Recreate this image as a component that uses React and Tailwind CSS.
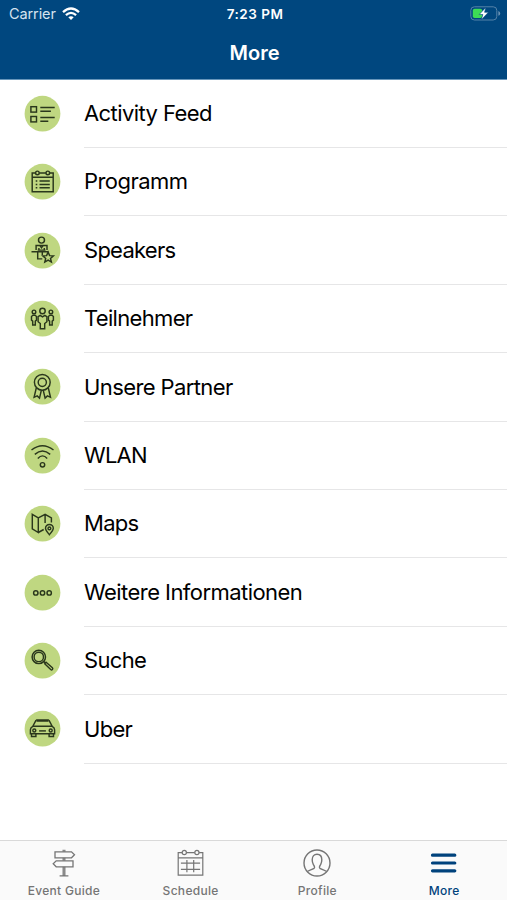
import { useState } from 'react';

function FeedIcon() {
  return (
    <>
      <rect x="6.4" y="11" width="5.6" height="5.4" />
      <rect x="6.4" y="20.8" width="5.6" height="5.4" />
      <path d="M15.8 11.8h14.4M15.8 15.5h10.6M15.8 21.8h14.4M15.8 25.5h8" />
    </>
  );
}

function ProgramIcon() {
  return (
    <>
      <path d="M11 9.3H7.7V28h21V9.3h-3.5M14.8 9.3h6.6M7.7 13.6h21" />
      <circle cx="12.9" cy="9.2" r="1.8" />
      <circle cx="23.3" cy="9.2" r="1.8" />
      <path d="M11.2 17.3h1.6M15 17.3h10.3M11.2 20.7h1.6M15 20.7h10.3M11.2 24.1h1.6M15 24.1h10.3" />
    </>
  );
}

function SpeakerIcon() {
  return (
    <>
      <circle cx="17" cy="7.4" r="3" />
      <path d="M11.6 17.4v-4.6h10.9v4.6M14.4 17.4v-2.2M19.8 17.4v-2.2" />
      <path d="M15.3 12.7l1.7 2.3 1.7-2.3" />
      <path d="M7 19h17M13.2 19v7.2h4.6M13.2 17.4h7.8M17.8 19v3.2" />
      <path d="M23.6 19.4l1.5 3.5 3.8.3-2.9 2.5.9 3.7-3.3-2-3.3 2 .9-3.7-2.9-2.5 3.8-.3z" />
    </>
  );
}

function AttendeesIcon() {
  return (
    <>
      <circle cx="18" cy="10.3" r="2.7" />
      <path d="M15.7 14.6l2.3 1.6 2.3-1.6 2.1 1.4v5l-2.2 1.8v5.3h-4.4v-5.3L13.6 21v-5z" />
      <circle cx="9.5" cy="11.2" r="1.8" />
      <path d="M8.4 14.6h2.2l1.4 1.2v3.6l-1.2 1v3.9H8.2v-3.9l-1.2-1v-3.6z" />
      <circle cx="26.4" cy="11.2" r="1.8" />
      <path d="M25.3 14.6h2.2l1.4 1.2v3.6l-1.2 1v3.9h-2.6v-3.9l-1.2-1v-3.6z" />
    </>
  );
}

function RibbonIcon() {
  return (
    <>
      <circle cx="17.8" cy="13.6" r="7.9" />
      <circle cx="17.8" cy="13.6" r="4.1" />
      <path d="M11.8 19.2L9.6 28.6l3.1-1.4 2.3 2.2 1.9-8M23.8 19.2l2.2 9.4-3.1-1.4-2.3 2.2-1.9-8" />
    </>
  );
}

function WlanIcon() {
  return (
    <>
      <path d="M7 12.3Q18 3.6 29 12.3M10.3 16.7Q18 9.8 25.7 16.7M13.3 20.7Q18 15.6 22.7 20.7" />
      <circle cx="18" cy="27.1" r="2.2" />
    </>
  );
}

function MapsIcon() {
  return (
    <>
      <path d="M7.8 8.6l6 3.6v14.6l-6-3.6zM13.8 12.2l6.8-3.6 6.3 3.6v4.6M20.6 8.6v8.8M13.8 26.8l5.4-3" />
      <path d="M24.9 29c-1.6-2-3.9-4.3-3.9-6.4a3.9 3.9 0 0 1 7.8 0c0 2.1-2.3 4.4-3.9 6.4z" />
      <circle cx="24.9" cy="22.7" r="1.4" />
    </>
  );
}

function InfoIcon() {
  return (
    <>
      <circle cx="11.3" cy="18.2" r="2.2" />
      <circle cx="18" cy="18.2" r="2.2" />
      <circle cx="24.7" cy="18.2" r="2.2" />
    </>
  );
}

function SearchIcon() {
  return (
    <>
      <circle cx="14.3" cy="14.2" r="6.7" />
      <circle cx="14.3" cy="14.2" r="4.7" />
      <path d="M19.1 18.7l1.7 1.5M21.6 19.5l6.3 5.6q.8.9 0 1.7t-1.7 0l-6-5.8z" />
    </>
  );
}

function CarIcon() {
  return (
    <>
      <path d="M11.6 9.3h12.8M12 10.4h12" />
      <path d="M11.6 9.4L8.3 15.6Q5.9 17 5.9 19v4h24.2v-4q0-2-2.4-3.4L24.4 9.4M8.3 15.6h19.4" />
      <path d="M7 23v2.8h4.4V23M24.6 23v2.8H29V23" />
      <circle cx="9.8" cy="19.8" r="1.5" />
      <circle cx="26.2" cy="19.8" r="1.5" />
      <path d="M14.6 20.2h6.8" />
    </>
  );
}

const menuItems = [
  { label: 'Activity Feed', icon: FeedIcon, tracking: 'tracking-[-0.58px]' },
  { label: 'Programm', icon: ProgramIcon, tracking: 'tracking-[-0.55px]' },
  { label: 'Speakers', icon: SpeakerIcon, tracking: 'tracking-[-0.74px]' },
  { label: 'Teilnehmer', icon: AttendeesIcon, tracking: 'tracking-[-0.68px]' },
  { label: 'Unsere Partner', icon: RibbonIcon, tracking: 'tracking-[-0.6px]' },
  { label: 'WLAN', icon: WlanIcon, tracking: 'tracking-[-0.75px]' },
  { label: 'Maps', icon: MapsIcon, tracking: 'tracking-[-0.7px]' },
  { label: 'Weitere Informationen', icon: InfoIcon, tracking: 'tracking-[-0.55px]' },
  { label: 'Suche', icon: SearchIcon, tracking: 'tracking-[-0.68px]' },
  { label: 'Uber', icon: CarIcon, tracking: 'tracking-[-0.7px]' },
];

function StatusBar() {
  return (
    <div className="grid h-7 grid-cols-3 items-center pl-[9px] pr-[6px] text-[14.5px] text-white">
      <div className="flex items-center gap-[6px] text-[#d5e3ef]">
        <span className="tracking-[-0.1px]">Carrier</span>
        <svg className="-mt-px h-[14px] w-[18px]" viewBox="0 0 18 14" fill="none" stroke="#fff" strokeWidth="2.3">
          <path d="M1 5.1Q9-2.1 17 5.1M3.9 8.1Q9 3.7 14.1 8.1" />
          <path d="M6.3 10.3Q9 8 11.7 10.3L9 13z" fill="#fff" stroke="none" />
        </svg>
      </div>
      <span className="text-center text-[13.5px] font-semibold tracking-[0.5px]">7:23 PM</span>
      {/* Battery */}
      <svg className="-mt-[2px] h-[15px] w-[31px] justify-self-end" viewBox="0 0 31 15" fill="none">
        <rect x="0.8" y="0.8" width="26" height="13.2" rx="3.6" stroke="#5583a9" />
        <path d="M28.4 5v4.8q1.8-.8 1.8-2.4T28.4 5z" fill="#6c94b6" />
        <rect x="2.8" y="2.7" width="9.4" height="9.4" rx="1.8" fill="#3ddc55" />
        <path d="M15.8 1.4L9.2 8.5h3.6l-1.4 5.2L18.4 6.3h-3.8z" fill="#fff" stroke="#00477f" strokeWidth="0.6" />
      </svg>
    </div>
  );
}

function MenuRow({ item }) {
  const Icon = item.icon;
  return (
    <li className="flex h-[68.4px] items-stretch">
      <div className="flex w-[84px] flex-shrink-0 items-center pl-6">
        <svg className="size-9 overflow-visible" viewBox="-0.5 0.3 36 36" fill="none" stroke="#2a371c" strokeWidth="1.45">
          <circle cx="18" cy="18" r="17.9" fill="#bfd781" stroke="none" />
          <Icon />
        </svg>
      </div>
      <div className={`flex flex-1 items-center border-b border-[#e6e6e7] pt-[0.6px] text-[22px] text-black ${item.tracking}`}>
        {item.label}
      </div>
    </li>
  );
}

function SignpostIcon() {
  return (
    <svg className="h-7 w-7" viewBox="0 0 28 28" fill="none" stroke="currentColor" strokeWidth="1.3">
      <path d="M5 2.8h16.5l3 3-3 3H5zM23 11.8H6.2l-3 3 3 3H23z" />
      <path d="M13.2.8v2M14.8.8v2M13.2 8.8v3M14.8 8.8v3M13.2 17.8v8.7M14.8 17.8v8.7M9.6 26.8h8.8" />
    </svg>
  );
}

function ScheduleIcon() {
  return (
    <svg className="h-7 w-7" viewBox="0.7 0 28 28" fill="none" stroke="currentColor" strokeWidth="1.2">
      <path d="M5.8 3.6H1.9v22.5h24.6V3.6h-3.7M10.2 3.6h8.2M1.9 8.8h24.6" />
      <circle cx="8" cy="3.5" r="2.1" />
      <circle cx="20.6" cy="3.5" r="2.1" />
      <path d="M4.6 14.2h19.2M4.6 20.3h19.2M10.6 11v12.3M17.4 11v12.3" />
    </svg>
  );
}

function ProfileIcon() {
  return (
    <svg className="h-7 w-7" viewBox="0 0 28 28" fill="none" stroke="currentColor" strokeWidth="1.4">
      <circle cx="14" cy="14" r="13" />
      <path d="M4.3 22.6c1.7-1.5 5.2-2.2 6.8-3.3 1.3-1-.1-2.5-.9-4.1-.8-1.5-1-2.8-1-4.4 0-3.6 2-5.6 4.8-5.6s4.8 2 4.8 5.6c0 1.6-.2 2.9-1 4.4-.8 1.6-2.2 3.1-.9 4.1 1.6 1.1 5.1 1.8 6.8 3.3" />
    </svg>
  );
}

function MoreIcon() {
  return (
    <svg className="h-7 w-7" viewBox="0.5 0 28 28" fill="none" stroke="currentColor" strokeWidth="3.2" strokeLinecap="round">
      <path d="M3 6.2h22.3M3 14h22.3M3 21.8h22.3" />
    </svg>
  );
}

const tabs = [
  { label: 'Event Guide', icon: SignpostIcon },
  { label: 'Schedule', icon: ScheduleIcon },
  { label: 'Profile', icon: ProfileIcon },
  { label: 'More', icon: MoreIcon },
];

export default function App() {
  const [activeTab, setActiveTab] = useState('More');

  return (
    <div className="flex h-[900px] w-full flex-col overflow-hidden bg-white font-['Inter',sans-serif]">
      <header className="h-[79.6px] flex-shrink-0 border-b border-[#6796bb] bg-[#00477f]">
        <StatusBar />
        <h1 className="pl-[2px] pt-[10px] text-center text-[20px] leading-[30px] font-semibold text-white">More</h1>
      </header>

      <ul className="flex-1">
        {menuItems.map((item) => (
          <MenuRow key={item.label} item={item} />
        ))}
      </ul>

      {/* Tab bar */}
      <nav className="grid h-[60px] flex-shrink-0 grid-cols-4 border-t border-[#d9d9d9] bg-[#fafafa]">
        {tabs.map(({ label, icon: Icon }) => (
          <button
            key={label}
            onClick={() => setActiveTab(label)}
            className={`flex flex-col items-center gap-[5px] pl-px pt-[8px] ${
              activeTab === label ? 'text-[#00427c]' : 'text-[#757575]'
            }`}
          >
            <Icon />
            <span className="text-[12px] leading-[18px] font-medium tracking-[0.3px]">{label}</span>
          </button>
        ))}
      </nav>
    </div>
  );
}
